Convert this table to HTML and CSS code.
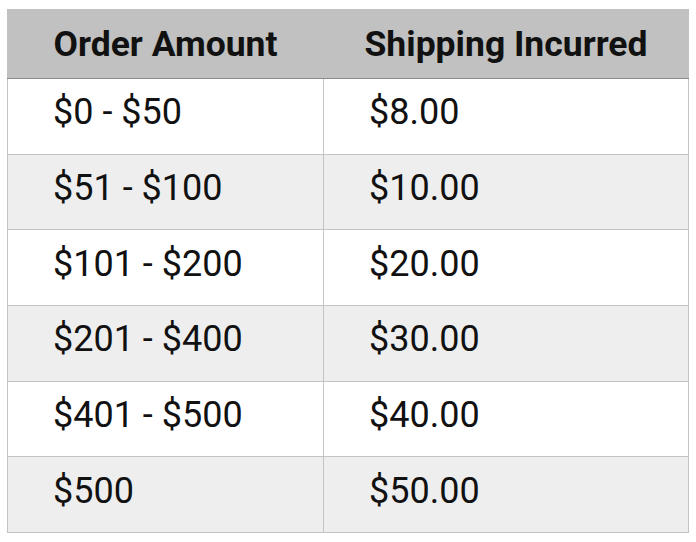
FILE: index.html
```html
<!DOCTYPE html>
<html>
<head>
<meta charset="utf-8">
<link rel="stylesheet" href="styles.css">
</head>
<body>
<table class="ship">
  <thead>
    <tr><th class="c1">Order Amount</th><th class="c2">Shipping Incurred</th></tr>
  </thead>
  <tbody>
    <tr><td>$0 - $50</td><td>$8.00</td></tr>
    <tr><td>$51 - $100</td><td>$10.00</td></tr>
    <tr><td>$101 - $200</td><td>$20.00</td></tr>
    <tr><td>$201 - $400</td><td>$30.00</td></tr>
    <tr><td>$401 - $500</td><td>$40.00</td></tr>
    <tr><td>$500</td><td>$50.00</td></tr>
  </tbody>
</table>
</body>
</html>
```
FILE: styles.css
```css
html, body { margin: 0; padding: 0; background: #ffffff; }
body { padding: 9px 0 0 7px; font-family: Roboto, "Liberation Sans", sans-serif; }
.ship {
  border-collapse: collapse;
  width: 682px;
  table-layout: fixed;
  color: #111;
}
.ship .c1 { width: 315px; }
.ship th {
  background: #c0c1c0;
  height: 68px;
  padding: 0;
  font-weight: 700;
  font-size: 35.5px;
  text-align: center;
  border: 1px solid #c0c1c0;
  border-bottom: 1px solid #8a8a8a;
  color: #111;
}
.ship td {
  height: 75.67px;
  padding: 0 0 8px 45px;
  box-sizing: border-box;
  font-size: 36px;
  border: 1px solid #c4c4c4;
  background: #ffffff;
}
.ship tbody tr:nth-child(even) td { background: #eeeeee; }
```
